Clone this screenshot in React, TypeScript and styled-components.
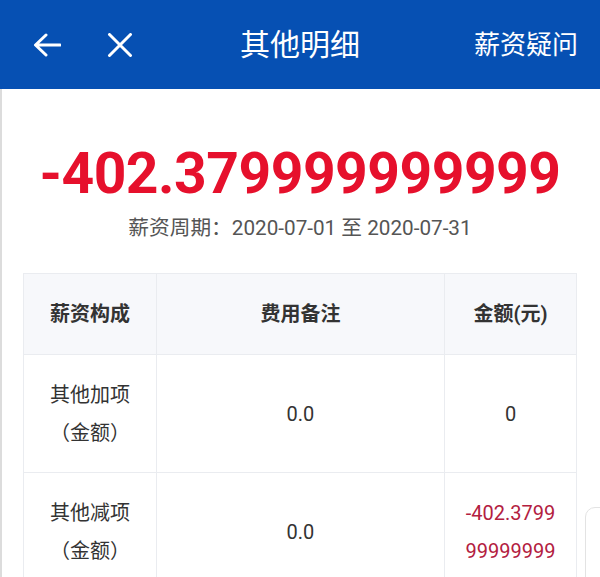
import { Fragment } from 'react';
import styled, { createGlobalStyle } from 'styled-components';

const GlobalStyle = createGlobalStyle`
  html, body {
    margin: 0;
    padding: 0;
    background: #ffffff;
  }
  body {
    font-family: Roboto, "Noto Sans CJK SC", sans-serif;
    color: #333333;
  }
`;

type Row = {
  name: string[];
  remark: string;
  amount: string;
  negative?: boolean;
};

const total = '-402.37' + '9'.repeat(10);

const rows: Row[] = [
  { name: ['其他加项', '（金额）'], remark: '0.0', amount: '0' },
  {
    name: ['其他减项', '（金额）'],
    remark: '0.0',
    amount: total,
    negative: true,
  },
];

const Page = styled.div`
  width: 600px;
  height: 577px;
  overflow: hidden;
  position: relative;
`;

// 顶部蓝色导航栏
const NavBar = styled.div`
  height: 89px;
  background-color: #0650b3;
  display: grid;
  grid-template-columns: 1fr auto 1fr;
  align-items: center;
  color: #ffffff;
`;

const NavLeft = styled.div`
  display: flex;
  align-items: center;
  gap: 46px;
  padding-left: 33px;
`;

const NavTitle = styled.div`
  font-size: 30px;
  line-height: 40px;
`;

const NavRight = styled.div`
  justify-self: end;
  padding-right: 22px;
  font-size: 26px;
  line-height: 36px;
`;

const IconButton = styled.span`
  display: flex;
  align-items: center;
`;

const Content = styled.div`
  border-left: 2px solid #dcdcdc;
  padding: 53px 23px 0 21px;
  min-height: 488px;
`;

const Total = styled.div`
  text-align: center;
  font-size: 57px;
  line-height: 64px;
  font-weight: 700;
  color: #e6102c;
  letter-spacing: -0.5px;
`;

const Period = styled.div`
  margin-top: 8px;
  text-align: center;
  font-size: 20.7px;
  line-height: 28px;
  color: #555555;
`;

const Table = styled.div`
  margin-top: 31px;
  display: grid;
  grid-template-columns: 133px 1fr 132px;
  border-top: 1px solid #eaecf0;
  border-left: 1px solid #eaecf0;
`;

const Cell = styled.div<{ head?: boolean; negative?: boolean }>`
  display: flex;
  flex-direction: column;
  align-items: center;
  justify-content: center;
  text-align: center;
  border-right: 1px solid #eaecf0;
  border-bottom: 1px solid #eaecf0;
  background-color: ${(p) => (p.head ? '#f7f8fb' : '#ffffff')};
  font-size: 20px;
  line-height: 38px;
  font-weight: ${(p) => (p.head ? 700 : 400)};
  color: ${(p) => (p.negative ? '#b3203f' : '#333333')};
  height: ${(p) => (p.head ? '80px' : '117px')};
  padding: 0 16px;
  word-break: break-all;
`;

// 右侧悬浮按钮（只露出一角）
const FloatTab = styled.div`
  position: absolute;
  left: 585px;
  top: 507px;
  width: 60px;
  height: 120px;
  border: 1px solid #e3e3e3;
  border-radius: 10px;
  background: #ffffff;
`;

function BackIcon() {
  return (
    <svg width="28" height="24" viewBox="0 0 28 24" fill="none">
      <path
        d="M27 12H3M13 2L2.5 12L13 22"
        stroke="#ffffff"
        strokeWidth="3"
        strokeLinecap="round"
        strokeLinejoin="round"
      />
    </svg>
  );
}

function CloseIcon() {
  return (
    <svg width="26" height="24" viewBox="0 0 26 24" fill="none">
      <path
        d="M2.5 1.5L23.5 22.5M23.5 1.5L2.5 22.5"
        stroke="#ffffff"
        strokeWidth="3"
        strokeLinecap="round"
      />
    </svg>
  );
}

export default function App() {
  return (
    <Page>
      <GlobalStyle />
      <NavBar>
        <NavLeft>
          <IconButton>
            <BackIcon />
          </IconButton>
          <IconButton>
            <CloseIcon />
          </IconButton>
        </NavLeft>
        <NavTitle>其他明细</NavTitle>
        <NavRight>薪资疑问</NavRight>
      </NavBar>
      <Content>
        <Total>{total}</Total>
        <Period>薪资周期：2020-07-01 至 2020-07-31</Period>
        <Table>
          <Cell head>薪资构成</Cell>
          <Cell head>费用备注</Cell>
          <Cell head>金额(元)</Cell>
          {rows.map((row, idx) => (
            <Fragment key={idx}>
              <Cell>
                {row.name.map((line) => (
                  <div key={line}>{line}</div>
                ))}
              </Cell>
              <Cell>{row.remark}</Cell>
              <Cell negative={row.negative}>{row.amount}</Cell>
            </Fragment>
          ))}
        </Table>
      </Content>
      <FloatTab />
    </Page>
  );
}
